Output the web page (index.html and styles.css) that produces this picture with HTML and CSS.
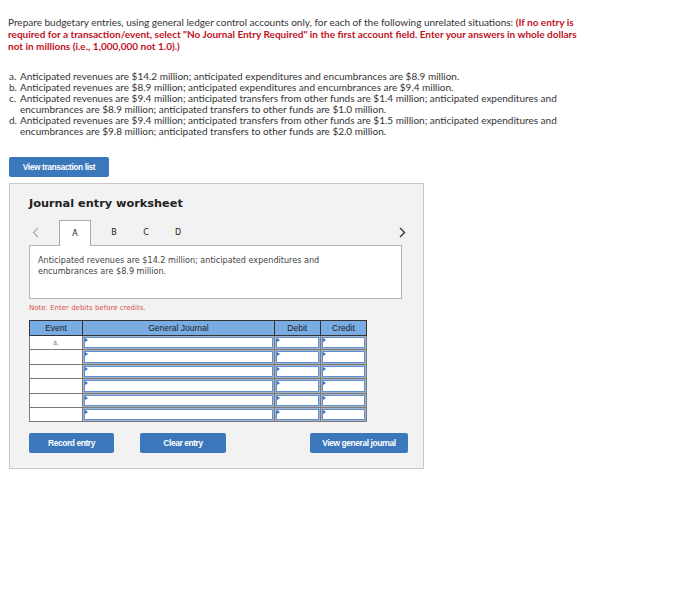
FILE: index.html
```html
<!DOCTYPE html>
<html>
<head>
    <meta charset="utf-8">
    <link rel="stylesheet" href="styles.css">
</head>
<body>
    <div class="page">
        <p class="prompt">Prepare budgetary entries, using general ledger control accounts only, for each of the following unrelated situations: <span class="instr">(If no entry is required for a transaction/event, select "No Journal Entry Required" in the first account field. Enter your answers in whole dollars not in millions (i.e., 1,000,000 not 1.0).)</span></p>

        <ol class="cases">
            <li><span class="tag">a.</span>Anticipated revenues are $14.2 million; anticipated expenditures and encumbrances are $8.9 million.</li>
            <li><span class="tag">b.</span>Anticipated revenues are $8.9 million; anticipated expenditures and encumbrances are $9.4 million.</li>
            <li><span class="tag">c.</span>Anticipated revenues are $9.4 million; anticipated transfers from other funds are $1.4 million; anticipated expenditures and encumbrances are $8.9 million; anticipated transfers to other funds are $1.0 million.</li>
            <li><span class="tag">d.</span>Anticipated revenues are $9.4 million; anticipated transfers from other funds are $1.5 million; anticipated expenditures and encumbrances are $9.8 million; anticipated transfers to other funds are $2.0 million.</li>
        </ol>

        <button class="btn btn-list">View transaction list</button>

        <div class="worksheet">
            <h2 class="ws-title">Journal entry worksheet</h2>

            <div class="tabs">
                <span class="arrow prev">
                    <svg width="7" height="11" viewBox="0 0 7 11"><path d="M6 1 L1.5 5.5 L6 10" fill="none" stroke="#b0b0b0" stroke-width="1.4"/></svg>
                </span>
                <span class="tab active">A</span>
                <span class="tab">B</span>
                <span class="tab">C</span>
                <span class="tab">D</span>
                <span class="arrow next">
                    <svg width="7" height="11" viewBox="0 0 7 11"><path d="M1 1 L5.5 5.5 L1 10" fill="none" stroke="#333" stroke-width="1.4"/></svg>
                </span>
            </div>

            <div class="case-box">
                Anticipated revenues are $14.2 million; anticipated expenditures and<br>
                encumbrances are $8.9 million.
            </div>

            <div class="note">Note: Enter debits before credits.</div>

            <table class="journal">
                <thead>
                    <tr>
                        <th class="c-event">Event</th>
                        <th class="c-acct">General Journal</th>
                        <th class="c-amt">Debit</th>
                        <th class="c-amt">Credit</th>
                    </tr>
                </thead>
                <tbody>
                    <tr>
                        <td class="event">a.</td>
                        <td class="in"><div class="field"></div></td>
                        <td class="in"><div class="field"></div></td>
                        <td class="in"><div class="field"></div></td>
                    </tr>
                    <tr>
                        <td class="event"></td>
                        <td class="in"><div class="field"></div></td>
                        <td class="in"><div class="field"></div></td>
                        <td class="in"><div class="field"></div></td>
                    </tr>
                    <tr>
                        <td class="event"></td>
                        <td class="in"><div class="field"></div></td>
                        <td class="in"><div class="field"></div></td>
                        <td class="in"><div class="field"></div></td>
                    </tr>
                    <tr>
                        <td class="event"></td>
                        <td class="in"><div class="field"></div></td>
                        <td class="in"><div class="field"></div></td>
                        <td class="in"><div class="field"></div></td>
                    </tr>
                    <tr>
                        <td class="event"></td>
                        <td class="in"><div class="field"></div></td>
                        <td class="in"><div class="field"></div></td>
                        <td class="in"><div class="field"></div></td>
                    </tr>
                    <tr>
                        <td class="event"></td>
                        <td class="in"><div class="field"></div></td>
                        <td class="in"><div class="field"></div></td>
                        <td class="in"><div class="field"></div></td>
                    </tr>
                </tbody>
            </table>

            <div class="actions">
                <button class="btn btn-record">Record entry</button>
                <button class="btn btn-clear">Clear entry</button>
                <button class="btn btn-journal">View general journal</button>
            </div>
        </div>
    </div>
</body>
</html>
```

FILE: styles.css
```css
* {
    box-sizing: border-box;
}

body {
    margin: 0;
    padding: 0;
    background: #ffffff;
    color: #333;
    font-family: Lato, 'Liberation Sans', Arial, sans-serif;
}

.page {
    padding: 16px 8px 0 8px;
}

.prompt {
    margin: 0;
    font-size: 10px;
    line-height: 12px;
    color: #333;
    width: 580px;
}

.instr {
    color: #c1121f;
    font-weight: bold;
}

.cases {
    list-style: none;
    margin: 19px 0 0 0;
    padding: 0 0 0 12px;
    font-size: 10px;
    line-height: 11px;
    width: 560px;
}

.cases li {
    position: relative;
}

.cases .tag {
    position: absolute;
    left: -11px;
}

/* Buttons */
.btn {
    display: flex;
    align-items: center;
    justify-content: center;
    border: none;
    border-radius: 2px;
    background: #3a77bb;
    color: #ffffff;
    font-family: 'Liberation Sans', Arial, sans-serif;
    font-weight: bold;
    font-size: 8.4px;
    letter-spacing: -0.4px;
    height: 20px;
    padding: 0;
    cursor: pointer;
}

.btn-list {
    width: 100px;
    margin: 20px 0 0 1px;
}

/* Worksheet panel */
.worksheet {
    width: 415px;
    height: 286px;
    margin: 6px 0 0 1px;
    padding: 0 0 0 19px;
    background: #f2f2f2;
    border: 1px solid #c8c8c8;
}

.ws-title {
    margin: 13px 0 0 0;
    font-family: 'DejaVu Sans', Verdana, sans-serif;
    font-size: 11.3px;
    font-weight: bold;
    color: #222;
    line-height: 14px;
}

.tabs {
    display: flex;
    align-items: flex-end;
    height: 26px;
    margin-top: 8px;
    width: 377px;
    font-family: 'DejaVu Sans', Verdana, sans-serif;
    font-size: 8px;
    color: #222;
}

.arrow {
    display: flex;
    align-items: center;
    height: 25px;
}

.arrow.prev {
    padding-left: 3px;
    width: 30px;
}

.arrow.next {
    margin-left: auto;
}

.tab {
    display: flex;
    align-items: center;
    justify-content: center;
    width: 32px;
    height: 25px;
}

.tab.active {
    background: #ffffff;
    border: 1px solid #a8a8a8;
    border-bottom: none;
    width: 32px;
    height: 26px;
    margin-bottom: -1px;
    margin-right: 7px;
    position: relative;
    z-index: 1;
}

.case-box {
    width: 373px;
    height: 54px;
    background: #ffffff;
    border: 1px solid #b4b4b4;
    padding: 9px 0 0 8px;
    font-family: 'DejaVu Sans', Verdana, sans-serif;
    font-size: 8.1px;
    line-height: 11px;
    color: #444;
}

.note {
    margin-top: 5px;
    font-family: 'DejaVu Sans', Verdana, sans-serif;
    font-size: 7px;
    color: #d9534f;
    line-height: 9px;
}

/* Journal table */
.journal {
    margin-top: 7px;
    border-collapse: collapse;
    width: 338px;
    font-family: 'Liberation Sans', Arial, sans-serif;
}

.journal th {
    background: #78ace3;
    border: 1px solid #333;
    height: 15px;
    padding: 0;
    font-size: 8.5px;
    font-weight: normal;
    color: #222;
}

.c-event { width: 53px; }
.c-acct { width: 191px; }
.c-amt { width: 46px; }

.journal td {
    height: 14.4px;
    padding: 0;
    border: 1px solid #7a7a7a;
}

.journal td.event {
    background: #ffffff;
    text-align: center;
    font-size: 6.5px;
    color: #777;
}

.journal td.in {
    background: #a6b4c6;
    padding: 1px;
}

.field {
    position: relative;
    height: 11.4px;
    background: #ffffff;
    border: 1px solid #5f91d2;
}

.field::before {
    content: '';
    position: absolute;
    left: 0;
    top: 0;
    border-left: 3px solid #2f6fd0;
    border-top: 2px solid transparent;
    border-bottom: 2px solid transparent;
}

.actions {
    display: flex;
    margin-top: 11px;
    width: 379px;
}

.btn-record {
    width: 85px;
}

.btn-clear {
    width: 86px;
    margin-left: 26px;
}

.btn-journal {
    width: 98px;
    margin-left: auto;
}
```
